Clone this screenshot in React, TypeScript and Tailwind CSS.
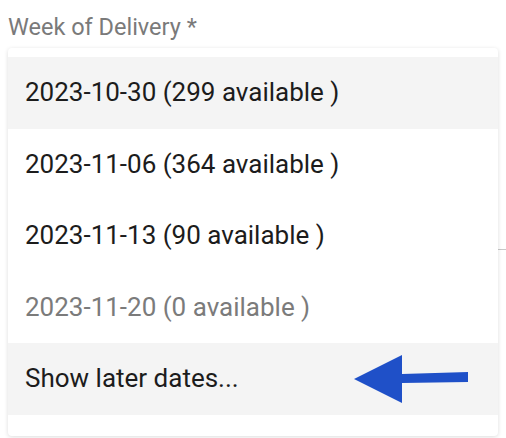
import React from 'react';

interface Option {
  label: string;
  disabled?: boolean;
  highlighted?: boolean;
}

const options: Option[] = [
  { label: '2023-10-30 (299 available )', highlighted: true },
  { label: '2023-11-06 (364 available )' },
  { label: '2023-11-13 (90 available )' },
  { label: '2023-11-20 (0 available )', disabled: true },
  { label: 'Show later dates...', highlighted: true },
];

const Arrow: React.FC = () => (
  <svg width="116" height="52" viewBox="0 0 116 52" className="shrink-0">
    <polygon points="0,26 48,2 48,21 114,19 114,29 48,30 48,50" fill="#1f50c8" />
  </svg>
);

const App: React.FC = () => {
  return (
    <div className="relative w-[506px] h-[438px] bg-white overflow-hidden font-['Roboto',sans-serif]">
      {/* input underline behind the menu */}
      <div className="absolute left-[490px] right-0 top-[249px] h-px bg-[#c8c8c8]" />

      <div className="pl-2 pt-[12px]">
        <p className="text-[23.5px] leading-[30px] text-[#7a7a7a]">Week of Delivery *</p>
      </div>

      <div className="relative ml-2 mt-[6px] w-[490px] bg-white rounded-[4px] shadow-[0_1px_4px_rgba(0,0,0,0.14)] pt-[9px] pb-[21px]">
        {options.map((o) => (
          <div
            key={o.label}
            className={`flex items-center h-[71.5px] pl-[17px] pr-[28px] text-[26px] ${
              o.highlighted ? 'bg-[#f4f4f4]' : ''
            } ${o.disabled ? 'text-[#7b7b7b]' : 'text-[#1c1c1c]'}`}
          >
            <span className="flex-1">{o.label}</span>
            {o.label.startsWith('Show') && <Arrow />}
          </div>
        ))}
      </div>
    </div>
  );
};

export default App;
